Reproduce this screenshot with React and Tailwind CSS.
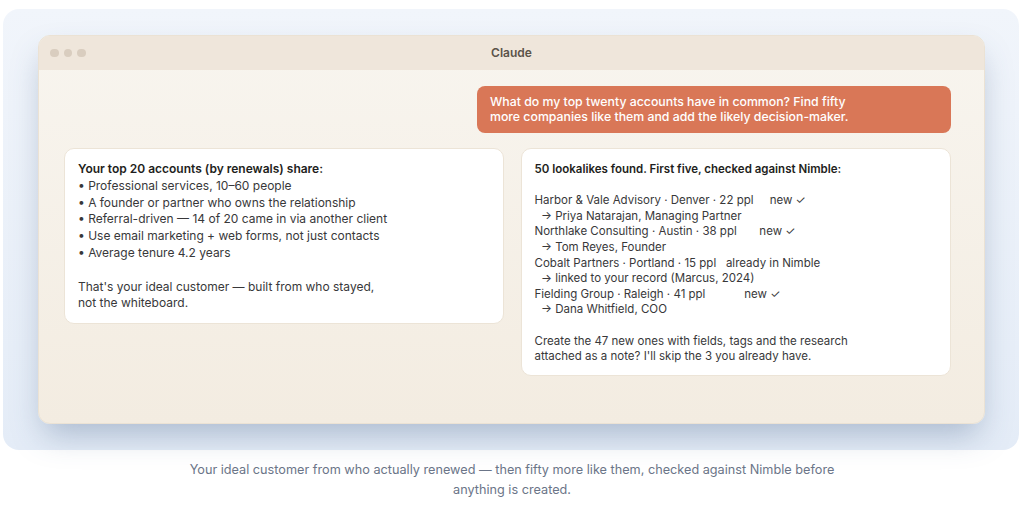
import React from 'react';

const font = { fontFamily: 'Inter, "Noto Sans", sans-serif' };

const bullets = [
  'Professional services, 10–60 people',
  'A founder or partner who owns the relationship',
  'Referral-driven — 14 of 20 came in via another client',
  'Use email marketing + web forms, not just contacts',
  'Average tenure 4.2 years',
];

const lookalikes = [
  { line: 'Harbor & Vale Advisory · Denver · 22 ppl     new ✓', sub: '  → Priya Natarajan, Managing Partner' },
  { line: 'Northlake Consulting · Austin · 38 ppl       new ✓', sub: '  → Tom Reyes, Founder' },
  { line: 'Cobalt Partners · Portland · 15 ppl   already in Nimble', sub: '  → linked to your record (Marcus, 2024)' },
  { line: 'Fielding Group · Raleigh · 41 ppl            new ✓', sub: '  → Dana Whitfield, COO' },
];

export default function App() {
  return (
    <div className="w-[1024px] h-[511px] bg-white overflow-hidden" style={font}>
      {/* STAGE */}
      <div className="mx-[3px] mt-[9px] w-[1016px] rounded-2xl bg-gradient-to-b from-[#f1f5fb] to-[#e4ecf7] pl-[35px] pr-[34px] pt-[26px] pb-[26px]">
        {/* WINDOW */}
        <div className="w-[947px] h-[389px] rounded-xl overflow-hidden border border-[#ebe2d4] bg-gradient-to-b from-[#f8f5ef] to-[#f3ece1] shadow-[0_16px_32px_-6px_rgba(60,90,130,0.35)] flex flex-col">
          <div className="relative h-[34px] shrink-0 bg-[#efe6db] flex items-center px-[11px]">
            <div className="flex gap-[5px]">
              <span className="w-[8.5px] h-[8.5px] rounded-full bg-[#d9cdbf]"></span>
              <span className="w-[8.5px] h-[8.5px] rounded-full bg-[#d9cdbf]"></span>
              <span className="w-[8.5px] h-[8.5px] rounded-full bg-[#d9cdbf]"></span>
            </div>
            <div className="absolute inset-0 flex items-center justify-center text-[12px] font-semibold text-[#5b5349]">Claude</div>
          </div>

          <div className="flex flex-col pl-[25px] pr-[33px] pt-[16px]">
            <div className="flex justify-end">
              <div className="w-[474px] rounded-lg bg-[#d97757] px-[13px] pt-[8px] pb-[9px] text-[12.3px] leading-[15px] font-medium text-white">
                What do my top twenty accounts have in common? Find fifty<br />more companies like them and add the likely decision-maker.
              </div>
            </div>

            <div className="mt-[15px] flex items-start gap-[17px]">
              <div className="w-[440px] rounded-[10px] border border-[#ece4d7] bg-white px-[13px] pt-[12px] pb-[11px] text-[12px] leading-[16.8px] text-[#38383a]">
                <div className="font-semibold text-[#1e1e20]">Your top 20 accounts (by renewals) share:</div>
                {bullets.map((b) => (
                  <div key={b}>• {b}</div>
                ))}
                <div className="h-[16.8px]"></div>
                <div>That's your ideal customer — built from who stayed,</div>
                <div>not the whiteboard.</div>
              </div>

              <div className="w-[431px] rounded-[10px] border border-[#ece4d7] bg-white px-[13px] pt-[13px] pb-[10px] text-[11.5px] leading-[15.6px] text-[#38383a] whitespace-pre">
                <div className="font-semibold text-[#1e1e20]">50 lookalikes found. First five, checked against Nimble:</div>
                <div className="h-[15.6px]"></div>
                {lookalikes.map((l) => (
                  <React.Fragment key={l.line}>
                    <div>{l.line}</div>
                    <div>{l.sub}</div>
                  </React.Fragment>
                ))}
                <div className="h-[15.6px]"></div>
                <div>Create the 47 new ones with fields, tags and the research</div>
                <div>attached as a note? I'll skip the 3 you already have.</div>
              </div>
            </div>
          </div>
        </div>
      </div>

      {/* CAPTION */}
      <p className="mx-auto mt-[10px] w-[680px] text-center text-[12.7px] leading-[20px] text-[#6b7588]">
        Your ideal customer from who actually renewed — then fifty more like them, checked against Nimble before anything is created.
      </p>
    </div>
  );
}
